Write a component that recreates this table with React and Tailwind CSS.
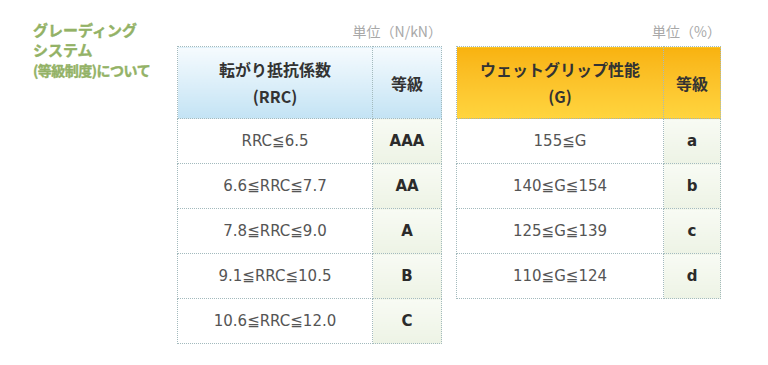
const rrcRows = [
  ['RRC≦6.5', 'AAA'],
  ['6.6≦RRC≦7.7', 'AA'],
  ['7.8≦RRC≦9.0', 'A'],
  ['9.1≦RRC≦10.5', 'B'],
  ['10.6≦RRC≦12.0', 'C'],
]

const gripRows = [
  ['155≦G', 'a'],
  ['140≦G≦154', 'b'],
  ['125≦G≦139', 'c'],
  ['110≦G≦124', 'd'],
]

const cell = 'border border-dotted border-[#a3babd] p-0 text-center align-middle'

function GradeTable({ unit, title, sub, rows, tableW, firstW, headClass }) {
  return (
    <div className="flex flex-col">
      <div className="h-[20px] mb-[5px] text-right text-[14px] leading-[20px] text-[#a8a8a8] font-['Noto_Sans_CJK_JP',sans-serif]">
        {unit}
      </div>
      <table className={`border-collapse table-fixed ${tableW}`}>
        <thead>
          <tr className="h-[72px]">
            <th className={`${cell} ${firstW} text-[16px] font-bold leading-[27px] text-[#333] font-['Noto_Sans_CJK_JP',sans-serif] ${headClass}`}>
              <div>{title}</div>
              <div>{sub}</div>
            </th>
            <th className={`${cell} text-[16px] font-bold text-[#333] font-['Noto_Sans_CJK_JP',sans-serif] ${headClass}`}>
              等級
            </th>
          </tr>
        </thead>
        <tbody>
          {rows.map(([range, grade]) => (
            <tr key={grade} className="h-[45px]">
              <td className={`${cell} bg-white text-[15px] text-[#555] font-['DejaVu_Sans','Noto_Sans_CJK_JP',sans-serif]`}>
                {range}
              </td>
              <td className={`${cell} bg-gradient-to-b from-[#f8fbf4] to-[#edf3e5] text-[15px] font-bold text-[#2b2b2b] font-['DejaVu_Sans',sans-serif]`}>
                {grade}
              </td>
            </tr>
          ))}
        </tbody>
      </table>
    </div>
  )
}

export default function App() {
  return (
    <div className="w-[768px] h-[365px] bg-white flex">
      <div className="w-[177px] shrink-0 pl-[33px] pt-[20px] text-[15px] font-bold leading-[20px] text-[#93b266] [-webkit-text-stroke:0.4px_#93b266] font-['Noto_Sans_CJK_JP',sans-serif]">
        <div>グレーディング</div>
        <div>システム</div>
        <div className="text-[14px] tracking-[-0.5px]">(等級制度)について</div>
      </div>
      <div className="flex gap-[14px] pt-[21px]">
        <GradeTable
          unit="単位（N/kN）"
          title="転がり抵抗係数"
          sub="(RRC)"
          rows={rrcRows}
          tableW="w-[265px]"
          firstW="w-[195px]"
          headClass="bg-gradient-to-b from-[#f6fbfe] to-[#c3e3f4]"
        />
        <GradeTable
          unit="単位（%）"
          title="ウェットグリップ性能"
          sub="(G)"
          rows={gripRows}
          tableW="w-[265px]"
          firstW="w-[207px]"
          headClass="bg-gradient-to-b from-[#f8b20e] to-[#ffd53e]"
        />
      </div>
    </div>
  )
}
